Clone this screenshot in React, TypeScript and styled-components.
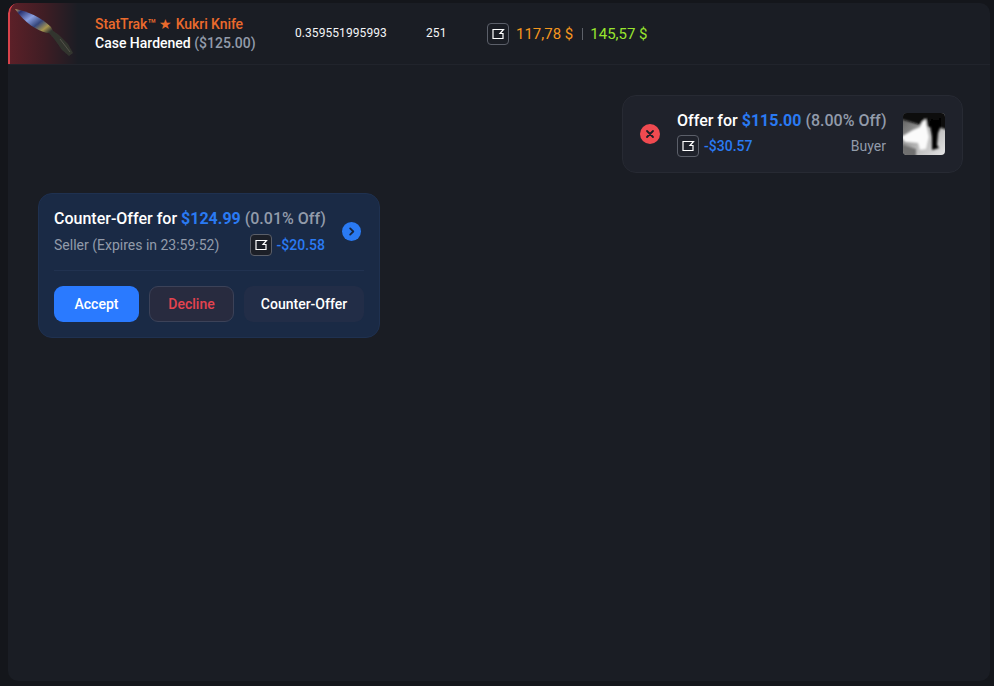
import React from 'react';
import styled, { createGlobalStyle } from 'styled-components';

const GlobalStyle = createGlobalStyle`
  html, body {
    margin: 0;
    height: 100%;
    background: #14161b;
    overflow: hidden;
  }
  #root {
    height: 100%;
  }
  * {
    box-sizing: border-box;
  }
`

const Page = styled.div`
  height: 686px;
  padding: 3px 4px 5px 8px;
  font-family: 'Roboto', sans-serif;
  color: #fff;
`

const Panel = styled.div`
  display: flex;
  flex-direction: column;
  height: 100%;
  background: #1a1d24;
  border-radius: 10px;
  overflow: hidden;
`

const Header = styled.div`
  display: flex;
  align-items: center;
  height: 62px;
  flex-shrink: 0;
  border-bottom: 1px solid #21242c;
`

const Thumb = styled.div`
  width: 70px;
  height: 100%;
  flex-shrink: 0;
  border-left: 2px solid #d9434b;
  border-top-left-radius: 10px;
  background: linear-gradient(90deg, #5c2028 0%, #3f1d24 50%, #1a1d24 100%);
`

const ItemName = styled.div`
  width: 200px;
  margin-left: 17px;
  flex-shrink: 0;
`

const Market = styled.div`
  font-size: 14px;
  line-height: 20px;
  font-weight: 500;
  color: #eb6a2c;
  letter-spacing: -0.08px;
`

const Finish = styled.div`
  margin-top: -1px;
  font-size: 14px;
  line-height: 20px;
  font-weight: 500;
  color: #fff;
  white-space: nowrap;
`

const Muted = styled.span`
  font-weight: 500;
  color: #929baa;
`

const Cell = styled.div<{ $width: number }>`
  width: ${p => p.$width}px;
  flex-shrink: 0;
  font-size: 12px;
  letter-spacing: 0.07px;
  color: #f4f5f7;
  padding-bottom: 1px;
`

const Prices = styled.div`
  display: flex;
  align-items: center;
  gap: 7px;
`

const Price = styled.span<{ $color: string }>`
  font-size: 15px;
  color: ${p => p.$color};
`

const Sep = styled.span`
  width: 1px;
  height: 12px;
  margin-left: 2px;
  background: #5d6169;
`

const Body = styled.div`
  flex: 1;
  display: flex;
  flex-direction: column;
  gap: 20px;
  padding: 30px 27px 0 30px;
`

const OfferCard = styled.div`
  align-self: flex-end;
  display: flex;
  align-items: center;
  width: 341px;
  height: 78px;
  padding: 0 17px 0 17px;
  background: #1f222b;
  border: 1px solid #272a33;
  border-radius: 14px;
`

const CancelDot = styled.div`
  display: flex;
  align-items: center;
  justify-content: center;
  width: 20px;
  height: 20px;
  margin-right: 17px;
  border-radius: 50%;
  background: #ef4a50;
  color: #1b1e26;
`

const OfferMain = styled.div`
  flex: 1;
  min-width: 0;
  padding-bottom: 3px;
`

const OfferTitle = styled.div`
  font-size: 16px;
  line-height: 24px;
  font-weight: 500;
  white-space: nowrap;
`

const Blue = styled.span`
  color: #2a7af3;
  font-weight: 700;
`

const OfferRow = styled.div`
  display: flex;
  align-items: center;
  justify-content: space-between;
  margin-top: 2px;
`

const Saving = styled.div`
  display: flex;
  align-items: center;
  gap: 5px;
  font-size: 14px;
  font-weight: 500;
  color: #2a7af3;
`

const RoleText = styled.span`
  font-size: 14px;
  color: #929baa;
`

const Avatar = styled.svg`
  width: 42px;
  height: 42px;
  margin-left: 17px;
  flex-shrink: 0;
  border-radius: 4px;
`

const CounterCard = styled.div`
  align-self: flex-start;
  width: 342px;
  height: 145px;
  padding: 13px 15px 0;
  background: #1a2a45;
  border: 1px solid #1f3150;
  border-radius: 14px;
`

const CounterTop = styled.div`
  display: flex;
  align-items: center;
  justify-content: space-between;
  height: 49px;
`

const CounterInfo = styled.div`
  width: 271px;
`

const CounterRow = styled(OfferRow)`
  margin-top: 3px;
`

const Arrow = styled.div`
  display: flex;
  align-items: center;
  justify-content: center;
  width: 19px;
  height: 19px;
  margin-right: 3px;
  border-radius: 50%;
  background: #2a7af3;
  color: #17243c;
`

const Divider = styled.div`
  height: 1px;
  margin: 14px 0 15px;
  background: #213250;
`

const Actions = styled.div`
  display: flex;
  gap: 10px;
`

const Button = styled.button<{ $kind: 'accept' | 'decline' | 'counter' }>`
  height: 36px;
  width: ${p => (p.$kind === 'counter' ? '120px' : '85px')};
  border-radius: 9px;
  font-family: 'Roboto', sans-serif;
  font-size: 14px;
  font-weight: 500;
  padding: 0;
  border: 1px solid ${p => (p.$kind === 'decline' ? '#3c4258' : 'transparent')};
  color: ${p => (p.$kind === 'decline' ? '#e4434f' : '#fff')};
  background: ${p =>
    p.$kind === 'accept' ? '#2a7aff' : p.$kind === 'decline' ? '#282b3f' : '#222d47'};
`

const LogoBox = styled.svg<{ $dark?: boolean }>`
  width: 22px;
  height: 22px;
  flex-shrink: 0;
  border: 1px solid #5b5f69;
  border-radius: 4px;
  background: ${p => (p.$dark ? '#1c1f27' : 'transparent')};
`

function Logo({ dark }: { dark?: boolean }) {
  return (
    <LogoBox $dark={dark} viewBox="0 0 20 20">
      <path d="M5 5.5H15.5L12 9.5H15V14.5H5Z" fill="none" stroke="#fff" strokeWidth="1.2" />
    </LogoBox>
  );
}

function Knife() {
  return (
    <svg width="68" height="60" viewBox="0 0 68 60">
      <defs>
        <linearGradient id="blade" x1="0" y1="0" x2="1" y2="0.8">
          <stop offset="0" stopColor="#d8b25a" />
          <stop offset="0.14" stopColor="#27306f" />
          <stop offset="0.42" stopColor="#8a9fe0" />
          <stop offset="0.66" stopColor="#35467a" />
          <stop offset="0.86" stopColor="#a8954f" />
          <stop offset="1" stopColor="#3a3c36" />
        </linearGradient>
        <filter id="soft">
          <feGaussianBlur stdDeviation="0.5" />
        </filter>
      </defs>
      <g filter="url(#soft)">
        <path d="M5 6C17 8 31 14 41 24L44 30L37 30C26 27 15 20 5 6Z" fill="url(#blade)" />
        <path d="M42 27L49 32L58 41L63 50L59 53L52 47L45 37L39 30Z" fill="#33352f" />
        <path d="M50 36L60 49" stroke="#55554a" strokeWidth="1" />
      </g>
    </svg>
  );
}

function Cats() {
  return (
    <Avatar viewBox="0 0 42 42">
      <defs>
        <linearGradient id="floor" x1="0" y1="0" x2="1" y2="1">
          <stop offset="0" stopColor="#555" />
          <stop offset="0.55" stopColor="#b5b5b5" />
          <stop offset="1" stopColor="#e6e6e6" />
        </linearGradient>
        <filter id="catBlur" x="-10%" y="-10%" width="120%" height="120%">
          <feGaussianBlur stdDeviation="1" />
        </filter>
      </defs>
      <rect width="42" height="42" fill="url(#floor)" />
      <g filter="url(#catBlur)">
        <path d="M-2 -2H44V17L36 14H24L-2 6Z" fill="#0b0b0b" />
        <path d="M-2 24L10 17L17 14L19 9L23 6L24 14L26 24L23 36L17 37L15 30L2 29Z" fill="#fafafa" />
        <path d="M28 4L31 7L35 7L38 3L38 13L35 20L34 32L36 35L29 37L29 24L27 12Z" fill="#050505" />
        <path d="M-2 31L13 36V44H-2Z" fill="#707070" />
      </g>
    </Avatar>
  );
}

export default function App() {
  return (
    <Page>
      <GlobalStyle />
      <Panel>
        <Header>
          <Thumb>
            <Knife />
          </Thumb>
          <ItemName>
            <Market>StatTrak™ ★ Kukri Knife</Market>
            <Finish>
              Case Hardened <Muted>($125.00)</Muted>
            </Finish>
          </ItemName>
          <Cell $width={131}>0.359551995993</Cell>
          <Cell $width={61}>251</Cell>
          <Prices>
            <Logo />
            <Price $color="#f5961f">117,78 $</Price>
            <Sep />
            <Price $color="#98e52e">145,57 $</Price>
          </Prices>
        </Header>
        <Body>
          <OfferCard>
            <CancelDot>
              <svg width="10" height="10" viewBox="0 0 10 10">
                <path d="M2 2l6 6M8 2l-6 6" stroke="currentColor" strokeWidth="1.8" strokeLinecap="round" />
              </svg>
            </CancelDot>
            <OfferMain>
              <OfferTitle>
                Offer for <Blue>$115.00</Blue> <Muted>(8.00% Off)</Muted>
              </OfferTitle>
              <OfferRow>
                <Saving>
                  <Logo />
                  -$30.57
                </Saving>
                <RoleText>Buyer</RoleText>
              </OfferRow>
            </OfferMain>
            <Cats />
          </OfferCard>
          <CounterCard>
            <CounterTop>
              <CounterInfo>
                <OfferTitle>
                  Counter-Offer for <Blue>$124.99</Blue> <Muted>(0.01% Off)</Muted>
                </OfferTitle>
                <CounterRow>
                  <RoleText>Seller (Expires in 23:59:52)</RoleText>
                  <Saving>
                    <Logo dark />
                    -$20.58
                  </Saving>
                </CounterRow>
              </CounterInfo>
              <Arrow>
                <svg width="9" height="9" viewBox="0 0 10 10">
                  <path d="M3.5 1.5L7 5L3.5 8.5" fill="none" stroke="currentColor" strokeWidth="2" strokeLinecap="round" strokeLinejoin="round" />
                </svg>
              </Arrow>
            </CounterTop>
            <Divider />
            <Actions>
              <Button $kind="accept">Accept</Button>
              <Button $kind="decline">Decline</Button>
              <Button $kind="counter">Counter-Offer</Button>
            </Actions>
          </CounterCard>
        </Body>
      </Panel>
    </Page>
  );
}
